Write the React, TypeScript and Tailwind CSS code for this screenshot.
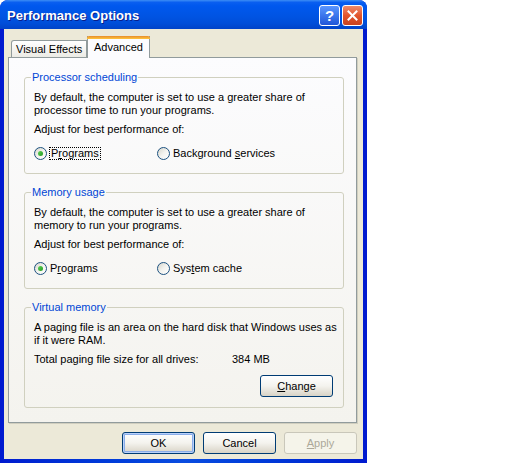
import React from "react"

function Radio({ checked }: { checked?: boolean }) {
  return (
    <span className="w-[13px] h-[13px] shrink-0 rounded-full border border-[#1c5180] bg-gradient-to-br from-[#d6d5cc] via-[#f3f3ef] to-white flex items-center justify-center">
      {checked && <span className="w-[5px] h-[5px] rounded-full bg-gradient-to-br from-[#5ed35a] to-[#1a9a1a]" />}
    </span>
  )
}

function Btn({ children, def, disabled }: { children: React.ReactNode; def?: boolean; disabled?: boolean }) {
  if (disabled) {
    return (
      <div className="w-[73px] h-[22px] rounded-[3px] border border-[#c9c7ba] bg-[#f5f4ea] text-[#aca899] flex items-center justify-center">
        {children}
      </div>
    )
  }
  return (
    <div
      className={
        "w-[73px] h-[22px] rounded-[3px] border border-[#003c74] bg-gradient-to-b from-white via-[#f4f3ee] to-[#d8d3c6] flex items-center justify-center text-black " +
        (def ? "shadow-[inset_0_0_0_1px_#b9d1fa,inset_0_0_0_2px_#8aade9]" : "")
      }
    >
      {children}
    </div>
  )
}

function Group({ title, children }: { title: string; children: React.ReactNode }) {
  return (
    <fieldset className="w-[320px] min-w-0 border border-[#d0d0bf] rounded-[3px] pl-[9px] pr-[10px] whitespace-nowrap">
      <legend className="-ml-[3px] px-[1px] leading-[13px] text-[#0046d5]">{title}</legend>
      {children}
    </fieldset>
  )
}

export default function App() {
  return (
    <div className="w-[512px] h-[463px] bg-white font-['Tahoma','Liberation_Sans',sans-serif] text-[11px] leading-[13px] text-black">
      <div className="w-[367px] h-[463px] flex flex-col rounded-t-[8px] bg-gradient-to-r from-[#0019cf] via-[#0a4ce0] to-[#0019cf] overflow-hidden">
        {/* title bar */}
        <div className="h-[29px] shrink-0 flex items-center pl-[7px] pr-[4px] bg-[linear-gradient(to_bottom,#3d8ef5_0%,#0a5ff0_8%,#0058ee_20%,#0054e3_55%,#004ed9_80%,#0043c8_100%)]">
          <span className="flex-1 pt-[2px] text-white font-bold text-[13px] font-['Liberation_Sans',sans-serif] [text-shadow:1px_1px_0_#0a1e8a]">
            Performance Options
          </span>
          <div className="w-[21px] h-[21px] mt-[1px] rounded-[3px] border border-white bg-gradient-to-b from-[#5a96ff] to-[#1f55d8] flex items-center justify-center text-white font-bold text-[15px] font-['Liberation_Sans',sans-serif]">
            ?
          </div>
          <div className="w-[21px] h-[21px] mt-[1px] ml-[2px] rounded-[3px] border border-white bg-gradient-to-b from-[#ee8a6a] via-[#e2552c] to-[#c9421f] flex items-center justify-center">
            <svg width="11" height="11" viewBox="0 0 11 11">
              <path d="M1.5 1.5 L9.5 9.5 M9.5 1.5 L1.5 9.5" stroke="white" strokeWidth="2" strokeLinecap="square" />
            </svg>
          </div>
        </div>

        {/* body */}
        <div className="flex-1 mx-[4px] mb-[4px] bg-[#ece9d8] flex flex-col pt-[7px]">
          {/* tabs */}
          <div className="flex items-end ml-[7px] h-[21px]">
            <div className="w-[76px] h-[17px] border border-b-0 border-[#919b9c] rounded-tl-[3px] bg-gradient-to-b from-white to-[#ecebe5] pl-[4px] flex items-center">
              Visual Effects
            </div>
            <div className="relative z-10 w-[63px] h-[22px] -mb-[1px] border-x border-[#919b9c] bg-[#fcfcfe] flex flex-col">
              <div className="h-[3px] rounded-t-[2px] bg-gradient-to-b from-[#e68b2c] to-[#ffc73c] -mx-[1px]" />
              <div className="flex-1 pl-[6px] pt-[2px]">Advanced</div>
            </div>
          </div>

          {/* panel */}
          <div className="ml-[4px] w-[349px] h-[366px] border border-[#919b9c] bg-gradient-to-b from-[#fcfcfe] to-[#f4f3ee] shadow-[1px_1px_0_#d0cebf] px-[15px] pt-[13px]">
            <div className="w-[320px] flex flex-col gap-[12px]">
              <Group title="Processor scheduling">
                <div className="pt-[7px]">
                  By default, the computer is set to use a greater share of
                  <br />
                  processor time to run your programs.
                </div>
                <div className="mt-[6px]">Adjust for best performance of:</div>
                <div className="mt-[11px] mb-[13px] flex items-center h-[13px]">
                  <div className="w-[123px] flex items-center">
                    <Radio checked />
                    <span className="ml-[2px] px-[1px] border border-dotted border-black leading-[11px]">
                      P<u>r</u>ograms
                    </span>
                  </div>
                  <Radio />
                  <span className="ml-[3px]">
                    Background <u>s</u>ervices
                  </span>
                </div>
              </Group>

              <Group title="Memory usage">
                <div className="pt-[7px]">
                  By default, the computer is set to use a greater share of
                  <br />
                  memory to run your programs.
                </div>
                <div className="mt-[6px]">Adjust for best performance of:</div>
                <div className="mt-[11px] mb-[13px] flex items-center h-[13px]">
                  <div className="w-[123px] flex items-center">
                    <Radio checked />
                    <span className="ml-[3px]">
                      P<u>r</u>ograms
                    </span>
                  </div>
                  <Radio />
                  <span className="ml-[3px]">
                    Sys<u>t</u>em cache
                  </span>
                </div>
              </Group>

              <Group title="Virtual memory">
                <div className="pt-[7px]">
                  A paging file is an area on the hard disk that Windows uses as
                  <br />
                  if it were RAM.
                </div>
                <div className="mt-[6px] flex">
                  <span className="w-[198px]">Total paging file size for all drives:</span>
                  <span>384 MB</span>
                </div>
                <div className="mt-[9px] mb-[10px] flex justify-end">
                  <Btn>
                    <u>C</u>hange
                  </Btn>
                </div>
              </Group>
            </div>
          </div>

          {/* buttons */}
          <div className="ml-[4px] w-[349px] mt-[9px] flex justify-end gap-[8px]">
            <Btn def>OK</Btn>
            <Btn>Cancel</Btn>
            <Btn disabled>
              <u>A</u>pply
            </Btn>
          </div>
        </div>
      </div>
    </div>
  )
}
